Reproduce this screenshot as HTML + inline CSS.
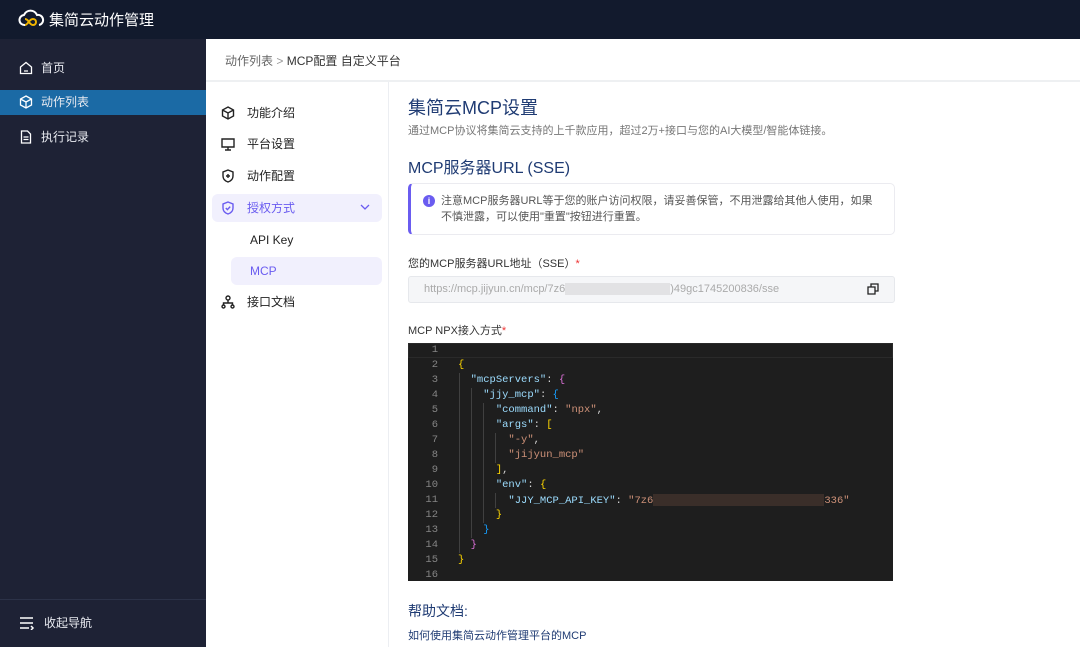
<!DOCTYPE html>
<html><head><meta charset="utf-8"><style>
*{margin:0;padding:0;box-sizing:border-box}
body{width:1080px;height:647px;overflow:hidden;background:#fff;font-family:"Liberation Sans","Noto Sans CJK SC",sans-serif;position:relative}
.abs{position:absolute}
.top{left:0;top:0;width:1080px;height:39px;background:#121a2d}
.side{left:0;top:39px;width:206px;height:608px;background:#1e2235}
.sitem{position:absolute;left:0;width:206px;height:25px;color:#e8eaf0;font-size:12px;line-height:25px;padding-left:41px}
.sitem svg{position:absolute;left:19px;top:5px}
.sub{position:absolute;left:212px;width:170px;height:28px;font-size:12px;line-height:28px;color:#222;padding-left:35px}
.sub svg{position:absolute;left:9px;top:7px}
.code{left:408px;top:343px;width:485px;height:238px;background:#1e1e1e;font-family:"Liberation Mono",monospace;font-size:10.5px}
.ln{position:absolute;left:0;width:30px;text-align:right;color:#858585}
.cl{position:absolute;left:50px;white-space:pre;color:#d4d4d4}
.k{color:#9cdcfe}.s{color:#ce9178}.y{color:#ffd700}.p{color:#da70d6}.b{color:#179fff}
.g{position:absolute;width:1px;background:#404040}
</style></head><body>
<div class="abs top"></div>
<svg class="abs" style="left:18px;top:8px" width="28" height="20" viewBox="0 0 28 20"><path d="M7 17a5 5 0 0 1-1-10 7 7 0 0 1 13 0 5 5 0 0 1 2 10" fill="none" stroke="#fff" stroke-width="2"/><path d="M7 17c3 0 4-6 8-6s4 6 0 6-4-6-8-6" fill="none" stroke="#f0b400" stroke-width="2"/></svg>
<div class="abs" style="left:49px;top:9px;color:#fff;font-size:15px">集简云动作管理</div>
<div class="abs side"></div>
<div class="sitem" style="top:56px"><svg width="14" height="14" viewBox="0 0 14 14" fill="none" stroke="#fff" stroke-width="1.3"><path d="M1.5 6L7 1.5 12.5 6v6.5h-11z M5 10h4"/></svg>首页</div>
<div class="sitem" style="top:90px;background:#1b6aa5"><svg width="14" height="14" viewBox="0 0 14 14" fill="none" stroke="#fff" stroke-width="1.3"><path d="M7 1l5.5 3v6L7 13 1.5 10V4z M1.5 4L7 7l5.5-3 M7 7v6"/></svg>动作列表</div>
<div class="sitem" style="top:125px"><svg width="14" height="14" viewBox="0 0 14 14" fill="none" stroke="#fff" stroke-width="1.3"><path d="M2.5 1h6l3 3v9h-9z M4.5 7h5 M4.5 9.5h5"/></svg>执行记录</div>
<div class="abs" style="left:0;top:599px;width:206px;height:1px;background:#2c3248"></div>
<div class="sitem" style="top:611px;padding-left:44px"><svg width="16" height="14" viewBox="0 0 16 14" fill="none" stroke="#fff" stroke-width="1.5"><path d="M1 2h13 M1 7h13 M1 12h9 M12 10l2 2-2 2"/></svg>收起导航</div>
<div class="abs" style="left:225px;top:52px;font-size:12px;color:#666">动作列表 <span style="color:#999">&gt;</span> <span style="color:#333">MCP配置 自定义平台</span></div>
<div class="abs" style="left:206px;top:80px;width:874px;height:2px;background:#eef0f2"></div>
<div class="abs" style="left:388px;top:82px;width:1px;height:565px;background:#eceef2"></div>
<div class="sub" style="top:99px"><svg width="14" height="14" viewBox="0 0 14 14" fill="none" stroke="#222" stroke-width="1.4"><path d="M7 1l5.5 3v6L7 13 1.5 10V4z M1.5 4L7 7l5.5-3 M7 7v6"/></svg>功能介绍</div>
<div class="sub" style="top:130px"><svg width="14" height="14" viewBox="0 0 14 14" fill="none" stroke="#222" stroke-width="1.4"><path d="M1 2h12v8H1z M7 10v3 M4 13h6"/></svg>平台设置</div>
<div class="sub" style="top:162px"><svg width="14" height="14" viewBox="0 0 14 14" fill="none" stroke="#222" stroke-width="1.4"><path d="M7 1l5 2v4c0 3-2 5-5 6-3-1-5-3-5-6V3z M7 5v4 M5 7h4"/></svg>动作配置</div>
<div class="sub" style="top:194px;background:#f1f0fd;border-radius:6px;color:#6a5cf0"><svg width="14" height="14" viewBox="0 0 14 14" fill="none" stroke="#6a5cf0" stroke-width="1.4"><path d="M7 1l5 2v4c0 3-2 5-5 6-3-1-5-3-5-6V3z M4.8 7l1.6 1.6 2.8-3"/></svg>授权方式<svg style="left:148px;top:10px" width="10" height="7" viewBox="0 0 10 7" fill="none" stroke="#6a5cf0" stroke-width="1.3"><path d="M1 1l4 4 4-4"/></svg></div>
<div class="abs" style="left:250px;top:233px;font-size:12px;color:#222">API Key</div>
<div class="abs" style="left:231px;top:257px;width:151px;height:28px;background:#f1f0fd;border-radius:6px;font-size:12px;line-height:28px;color:#6a5cf0;padding-left:19px">MCP</div>
<div class="sub" style="top:288px"><svg width="14" height="14" viewBox="0 0 14 14" fill="none" stroke="#222" stroke-width="1.4"><circle cx="7" cy="3" r="2"/><circle cx="2.5" cy="11.5" r="1.5"/><circle cx="11.5" cy="11.5" r="1.5"/><path d="M7 5v3 M2.5 10V8h9v2"/></svg>接口文档</div>
<div class="abs" style="left:408px;top:94px;font-size:18px;color:#1f3b73">集简云MCP设置</div>
<div class="abs" style="left:408px;top:122px;font-size:11px;color:#777">通过MCP协议将集简云支持的上千款应用，超过2万+接口与您的AI大模型/智能体链接。</div>
<div class="abs" style="left:408px;top:154px;font-size:16px;color:#1f3b73">MCP服务器URL (SSE)</div>
<div class="abs" style="left:408px;top:183px;width:487px;height:52px;border:1px solid #ebebf0;border-left:3px solid #6a5cf0;border-radius:5px;font-size:11px;color:#555;padding:9px 14px 0 30px;line-height:16px">注意MCP服务器URL等于您的账户访问权限，请妥善保管，不用泄露给其他人使用，如果不慎泄露，可以使用"重置"按钮进行重置。<div style="position:absolute;left:12px;top:11px;width:12px;height:12px;border-radius:50%;background:#6a5cf0;color:#fff;font-size:9px;line-height:12px;text-align:center;font-weight:bold">i</div></div>
<div class="abs" style="left:408px;top:255px;font-size:11px;color:#333">您的MCP服务器URL地址（SSE）<span style="color:#e33">*</span></div>
<div class="abs" style="left:408px;top:276px;width:487px;height:27px;background:#f5f6f8;border:1px solid #e6e8ec;border-radius:3px;font-size:11px;color:#aaa;line-height:25px;padding-left:15px">https://mcp.jijyun.cn/mcp/7z6<span style="display:inline-block;width:105px;height:12px;background:#e2e2e4;vertical-align:middle"></span>)49gc1745200836/sse</div>
<svg class="abs" style="left:867px;top:283px" width="12" height="12" viewBox="0 0 12 12" fill="none" stroke="#222" stroke-width="1.3"><path d="M1 4h7v7H1z M4 4V1h7v7H8"/></svg>
<div class="abs" style="left:408px;top:322px;font-size:11px;color:#333">MCP NPX接入方式<span style="color:#e33">*</span></div>
<div class="abs code">
<div style="position:absolute;left:0;top:0;width:485px;height:15px;border:1px solid #2a2a2a"></div>
<div class="g" style="left:51px;top:30px;height:180px"></div>
<div class="g" style="left:63px;top:45px;height:150px"></div>
<div class="g" style="left:75px;top:60px;height:120px"></div>
<div class="g" style="left:87px;top:90px;height:30px"></div>
<div class="g" style="left:87px;top:150px;height:15px"></div>
<script>
var L=['','<span class="y">{</span>','  <span class="k">"mcpServers"</span>: <span class="p">{</span>','    <span class="k">"jjy_mcp"</span>: <span class="b">{</span>','      <span class="k">"command"</span>: <span class="s">"npx"</span>,','      <span class="k">"args"</span>: <span class="y">[</span>','        <span class="s">"-y"</span>,','        <span class="s">"jijyun_mcp"</span>','      <span class="y">]</span>,','      <span class="k">"env"</span>: <span class="y">{</span>','        <span class="k">"JJY_MCP_API_KEY"</span>: <span class="s">"7z6<span style="display:inline-block;width:171px;height:12px;background:#3a2e29;vertical-align:middle"></span>336"</span>','      <span class="y">}</span>','    <span class="b">}</span>','  <span class="p">}</span>','<span class="y">}</span>',''];
for(var i=0;i<16;i++)document.write('<div class="ln" style="top:'+(1+i*15)+'px">'+(i+1)+'</div><div class="cl" style="top:'+(1+i*15)+'px">'+L[i]+'</div>');
</script>
</div>
<div class="abs" style="left:408px;top:601px;font-size:14px;color:#1f3b73">帮助文档:</div>
<div class="abs" style="left:408px;top:627px;font-size:11px;color:#1f3b73">如何使用集简云动作管理平台的MCP</div>
</body></html>
